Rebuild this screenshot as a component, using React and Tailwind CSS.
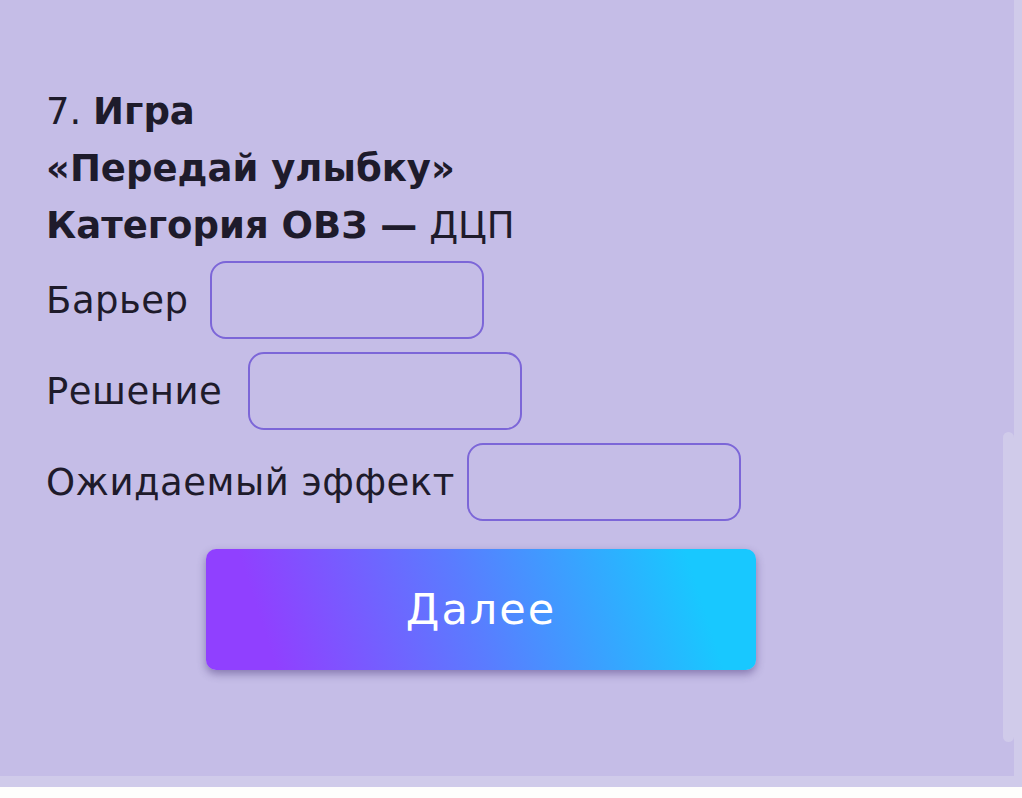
import React from 'react';

const fields = [
  { label: 'Барьер', w: 'w-[146px]' },
  { label: 'Решение', w: 'w-[184px]' },
  { label: 'Ожидаемый эффект', w: 'w-[403px]' },
];

export default function App() {
  return (
    <div className="w-[1022px] h-[798px] bg-[#fefefc] font-['DejaVu_Sans',sans-serif]">
      <div className="w-[1022px] h-[787px] bg-[#d0cbea]">
        <div className="relative w-[1014px] h-[776px] bg-[#c5bde7] pl-[46px] pt-[83px] text-[#1e1b2b]">
          {/* Title */}
          <div className="text-[37px] leading-[57px]">
            <div>
              7. <span className="font-bold">Игра</span>
            </div>
            <div className="font-bold">«Передай улыбку»</div>
            <div>
              <span className="font-bold">Категория ОВЗ —</span> ДЦП
            </div>
          </div>

          {/* Fields */}
          <div className="mt-[7px] flex flex-col gap-[13px]">
            {fields.map((f) => (
              <div key={f.label} className="flex items-center gap-[18px]">
                <span className={`${f.w} whitespace-nowrap text-[37px] leading-none tracking-[0.5px]`}>{f.label}</span>
                <input
                  type="text"
                  className="w-[274px] h-[78px] rounded-[16px] border-2 border-[#7c66d8] bg-transparent outline-none"
                />
              </div>
            ))}
          </div>

          {/* Button */}
          <button className="ml-[160px] mt-[28px] w-[550px] h-[121px] rounded-[10px] bg-[linear-gradient(72deg,#9040ff_12%,#5a7cff_48%,#18c8ff_88%)] text-white text-[43px] tracking-[2px] shadow-[0_4px_8px_rgba(60,40,110,0.45)]">
            Далее
          </button>

          {/* Scrollbar */}
          <div className="absolute right-0 top-[432px] w-[11px] h-[310px] rounded-[6px] bg-[#d0cbea]" />
        </div>
      </div>
    </div>
  );
}
